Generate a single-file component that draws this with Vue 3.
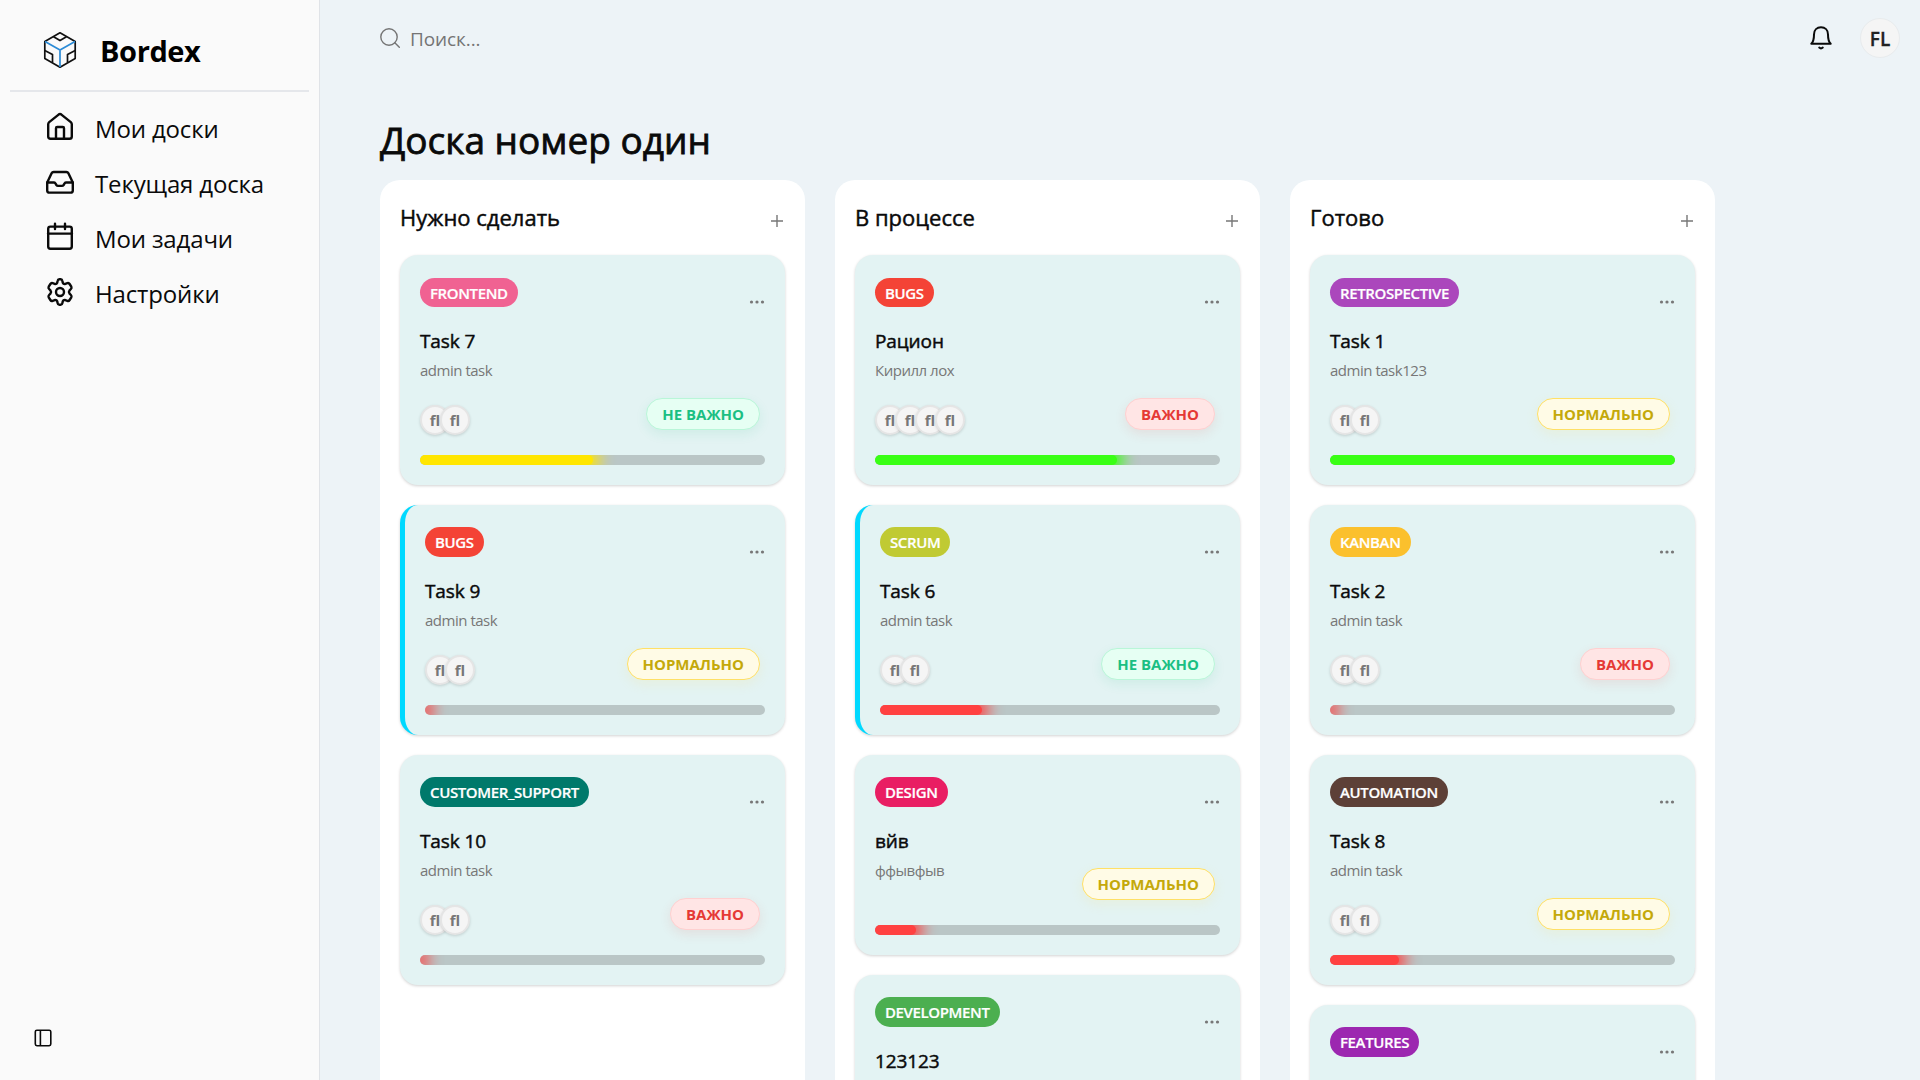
<script setup>
const nav = [
  { text: 'Мои доски', icon: 'home' },
  { text: 'Текущая доска', icon: 'inbox' },
  { text: 'Мои задачи', icon: 'calendar' },
  { text: 'Настройки', icon: 'gear' },
]

const priorities = {
  low: 'НЕ ВАЖНО',
  normal: 'НОРМАЛЬНО',
  high: 'ВАЖНО',
}

const RED = '#ff4141'
const YELLOW = '#ffe600'
const GREEN = '#39ff14'

const columns = [
  {
    title: 'Нужно сделать',
    cards: [
      { tag: 'FRONTEND', color: '#f06292', title: 'Task 7', text: 'admin task', users: 2, priority: 'low', progress: 50, bar: YELLOW },
      { tag: 'BUGS', color: '#f44336', title: 'Task 9', text: 'admin task', users: 2, priority: 'normal', progress: 0, bar: RED, mine: true },
      { tag: 'CUSTOMER_SUPPORT', color: '#00796b', title: 'Task 10', text: 'admin task', users: 2, priority: 'high', progress: 0, bar: RED },
    ],
  },
  {
    title: 'В процессе',
    cards: [
      { tag: 'BUGS', color: '#f44336', title: 'Рацион', text: 'Кирилл лох', users: 4, priority: 'high', progress: 70, bar: GREEN },
      { tag: 'SCRUM', color: '#c0ca33', title: 'Task 6', text: 'admin task', users: 2, priority: 'low', progress: 30, bar: RED, mine: true },
      { tag: 'DESIGN', color: '#e91e63', title: 'вйв', text: 'ффывфыв', users: 0, priority: 'normal', progress: 12, bar: RED },
      { tag: 'DEVELOPMENT', color: '#4caf50', title: '123123', text: '', users: 0, progress: 0, bar: RED },
    ],
  },
  {
    title: 'Готово',
    cards: [
      { tag: 'RETROSPECTIVE', color: '#ab47bc', title: 'Task 1', text: 'admin task123', users: 2, priority: 'normal', progress: 100, bar: GREEN },
      { tag: 'KANBAN', color: '#fbc02d', title: 'Task 2', text: 'admin task', users: 2, priority: 'high', progress: 0, bar: RED },
      { tag: 'AUTOMATION', color: '#5d4037', title: 'Task 8', text: 'admin task', users: 2, priority: 'normal', progress: 20, bar: RED },
      { tag: 'FEATURES', color: '#9c27b0', title: '', text: '', users: 0, progress: 0, bar: RED },
    ],
  },
]
</script>

<template>
  <div class="app">
    <aside class="sidebar">
      <div class="brand">
        <svg class="logo" width="34" height="38" viewBox="0 0 34 38" fill="none" stroke-width="1.7" stroke-linejoin="round">
          <path d="M17 1.8 32.2 10.4V27.4L17 36.2 1.8 27.4V10.4Z" stroke="#111" />
          <path d="M11 5.4V6L17 9.6 23 6V5.4M1.8 19.6 9.5 23.6V31.4M32.2 19.6 24.5 23.6V31.4" stroke="#111" />
          <path d="M2 10.6 17 19 32 10.6M17 19V36" stroke="#2b8bd6" />
        </svg>
        <span class="brand-name">Bordex</span>
      </div>
      <nav class="nav">
        <a v-for="item in nav" :key="item.text" class="nav-item">
          <svg class="nav-icon" width="30" height="30" viewBox="0 0 30 30" fill="none" stroke="#0a0a0a" stroke-width="2.4" stroke-linecap="round" stroke-linejoin="round">
            <template v-if="item.icon === 'home'">
              <path d="M3.2 12.2Q3.2 11 4.2 10.1L13.6 2.6Q15 1.6 16.4 2.6L25.8 10.1Q26.8 11 26.8 12.2V24.4Q26.8 26.7 24.5 26.7H5.5Q3.2 26.7 3.2 24.4Z" />
              <path d="M11 26.5V16.2Q11 15 12.2 15H17.8Q19 15 19 16.2V26.5" />
            </template>
            <template v-else-if="item.icon === 'inbox'">
              <path d="M2.2 15.5 6.6 6.2Q7.2 5 8.6 5H21.4Q22.8 5 23.4 6.2L27.8 15.5V23.4Q27.8 25.6 25.6 25.6H4.4Q2.2 25.6 2.2 23.4Z" />
              <path d="M2.2 15.5H8.8Q9.8 15.5 10.4 16.4L11.4 18Q12 18.9 13 18.9H17Q18 18.9 18.6 18L19.6 16.4Q20.2 15.5 21.2 15.5H27.8" />
            </template>
            <template v-else-if="item.icon === 'calendar'">
              <rect x="3.2" y="4.6" width="23.6" height="22.2" rx="2.2" />
              <path d="M3 11.6H27M10 1.8V7M20 1.8V7" />
            </template>
            <template v-else>
              <circle cx="15" cy="15" r="4" />
              <path d="M12.6 3.9Q12.9 2.2 14.3 2.2H15.7Q17.1 2.2 17.4 3.9L17.8 5.8Q18.3 7 19.7 7.1L22.3 6.2Q23.8 5.7 24.6 7L26.3 9.7Q26.9 11 25.9 12L24.6 13.3Q23.3 15 24.6 16.7L25.9 18Q26.9 19 26.3 20.3L24.6 23Q23.8 24.3 22.3 23.8L19.7 22.9Q18.3 23 17.8 24.2L17.4 26.1Q17.1 27.8 15.7 27.8H14.3Q12.9 27.8 12.6 26.1L12.2 24.2Q11.7 23 10.3 22.9L7.7 23.8Q6.2 24.3 5.4 23L3.7 20.3Q3.1 19 4.1 18L5.4 16.7Q6.7 15 5.4 13.3L4.1 12Q3.1 11 3.7 9.7L5.4 7Q6.2 5.7 7.7 6.2L10.3 7.1Q11.7 7 12.2 5.8Z" />
            </template>
          </svg>
          <span class="nav-text">{{ item.text }}</span>
        </a>
      </nav>
      <svg class="collapse" width="20" height="20" viewBox="0 0 20 20" fill="none" stroke="#0a0a0a" stroke-width="1.6">
        <rect x="2.3" y="2.2" width="15.5" height="15.5" rx="1.6" />
        <path d="M7.4 2.2V17.7" />
      </svg>
    </aside>

    <main class="main">
      <header class="topbar">
        <label class="search">
          <svg width="20" height="20" viewBox="0 0 20 20" fill="none" stroke="#757575" stroke-width="1.4" stroke-linecap="round">
            <circle cx="9" cy="9" r="8.2" />
            <path d="M14.8 14.8 19.3 19.2" />
          </svg>
          <span class="search-text">Поиск...</span>
        </label>
        <div class="tools">
          <svg width="24" height="26" viewBox="0 0 24 26" fill="none" stroke="#0a0a0a" stroke-width="2" stroke-linecap="round" stroke-linejoin="round">
            <path d="M2.3 18.8C4.6 16.4 5 14.5 5 9.4C5 5 8 2.2 12 2.2S19 5 19 9.4C19 14.5 19.4 16.4 21.7 18.8Z" />
            <path d="M10.2 22.6Q12 24.2 13.8 22.6" />
          </svg>
          <div class="profile">FL</div>
        </div>
      </header>

      <h1 class="title">Доска номер один</h1>

      <div class="board">
        <section v-for="col in columns" :key="col.title" class="column">
          <div class="column-head">
            <h2>{{ col.title }}</h2>
            <svg width="14" height="14" viewBox="0 0 14 14" stroke="#777" stroke-width="1.4"><path d="M1 7H13M7 1V13" /></svg>
          </div>
          <article v-for="card in col.cards" :key="card.tag" class="card" :class="{ mine: card.mine, short: !card.users }">
            <div class="card-top">
              <span class="tag" :style="{ background: card.color }">{{ card.tag }}</span>
              <svg class="dots" width="16" height="4" viewBox="0 0 16 4" fill="#777"><circle cx="2.5" cy="2" r="1.6" /><circle cx="8" cy="2" r="1.6" /><circle cx="13.5" cy="2" r="1.6" /></svg>
            </div>
            <h3>{{ card.title }}</h3>
            <p>{{ card.text }}</p>
            <div class="card-foot">
              <div class="users">
                <span v-for="n in card.users" :key="n" class="user">fl</span>
              </div>
              <span v-if="card.priority" class="priority" :class="card.priority">{{ priorities[card.priority] }}</span>
            </div>
            <div class="track">
              <div class="fill" :style="{ width: card.progress + '%', background: card.bar, color: card.bar }"></div>
            </div>
          </article>
        </section>
      </div>
    </main>
  </div>
</template>

<style>
body {
  margin: 0;
  overflow: hidden;
}
</style>

<style scoped>
.app {
  display: flex;
  width: 1920px;
  height: 1080px;
  overflow: hidden;
  background: #edf3f7;
  color: #0a0a0a;
  font-family: "Open Sans", "Noto Sans", sans-serif;
  box-sizing: border-box;
}
.sidebar {
  box-sizing: border-box;
  flex: none;
  display: flex;
  flex-direction: column;
  width: 320px;
  height: 1080px;
  padding: 0 10px;
  background: #fafafa;
  border-right: 1px solid #e0e3e7;
}
.brand {
  display: flex;
  align-items: center;
  height: 90px;
  padding-left: 33px;
  border-bottom: 2px solid #e5e7eb;
}
.logo {
  margin-top: 9px;
}
.brand-name {
  margin: 12px 0 0 23px;
  font-size: 29px;
  font-weight: 700;
  line-height: 40px;
  letter-spacing: -0.4px;
  color: #000;
}
.nav {
  display: flex;
  flex-direction: column;
  padding: 9px 0 0 35px;
}
.nav-item {
  display: flex;
  height: 55px;
}
.nav-icon {
  margin-top: 11px;
}
.nav-text {
  margin-left: 20px;
  font-size: 24px;
  line-height: 56px;
  letter-spacing: -0.15px;
  white-space: nowrap;
}
.collapse {
  margin: auto 0 32px 23px;
}
.main {
  flex: 1;
  display: flex;
  flex-direction: column;
  padding-left: 60px;
}
.topbar {
  flex: none;
  display: flex;
  justify-content: space-between;
  height: 76px;
  padding-right: 20px;
  align-items: center;
}
.search {
  display: flex;
  align-items: center;
  gap: 10px;
}
.search-text {
  font-size: 19px;
  line-height: 24px;
  letter-spacing: -0.1px;
  padding-top: 2px;
  color: #757575;
}
.tools {
  display: flex;
  align-items: center;
  gap: 27px;
}
.profile {
  box-sizing: border-box;
  width: 40px;
  height: 40px;
  border: 1px solid #e8ebed;
  border-radius: 50%;
  background: #f5f5f5;
  text-align: center;
  font-size: 19px;
  font-weight: 600;
  line-height: 40px;
  -webkit-text-stroke: 0.3px currentColor;
  color: #222;
}
.title {
  flex: none;
  height: 104px;
  margin: 0;
  font-size: 37px;
  font-weight: 500;
  line-height: 127px;
  -webkit-text-stroke: 0.8px currentColor;
  white-space: nowrap;
}
.board {
  display: flex;
  gap: 30px;
  flex: 1;
}
.column {
  box-sizing: border-box;
  width: 425px;
  height: 1000px;
  padding: 0 20px;
  border-radius: 20px;
  background: #fff;
}
.column-head {
  display: flex;
  align-items: center;
  justify-content: space-between;
  height: 75px;
  padding-right: 1px;
}
.column-head h2 {
  margin: -2px 0 0;
  font-size: 22px;
  font-weight: 500;
  line-height: 30px;
  -webkit-text-stroke: 0.45px currentColor;
}
.column-head svg {
  margin-top: 7px;
}
.card {
  box-sizing: border-box;
  height: 230px;
  margin-bottom: 20px;
  padding: 22px 20px 0;
  border-radius: 18px;
  background: #e3f3f3;
  box-shadow: 0 1px 3px rgba(0, 0, 0, 0.18);
}
.card.short {
  height: 200px;
}
.card.mine {
  border-left: 5px solid #00d9ff;
}
.card-top {
  display: flex;
  justify-content: space-between;
  height: 49px;
}
.tag {
  box-sizing: border-box;
  height: 30px;
  padding: 0 10px;
  border-radius: 15px;
  color: #fff;
  font-size: 15px;
  font-weight: 600;
  line-height: 31px;
  letter-spacing: -0.38px;
  -webkit-text-stroke: 0.2px currentColor;
}
.column-head + .card .tag {
  height: 29px;
  margin-top: 1px;
}
.dots {
  margin-top: 22.5px;
}
.card h3 {
  margin: 0;
  height: 30px;
  font-size: 19px;
  font-weight: 500;
  line-height: 30px;
  letter-spacing: -0.1px;
  -webkit-text-stroke: 0.45px currentColor;
}
.card p {
  margin: 0;
  height: 28px;
  font-size: 15px;
  line-height: 28px;
  letter-spacing: -0.48px;
  color: #777;
}
.card-foot {
  display: flex;
  justify-content: space-between;
  height: 71px;
}
.short .card-foot {
  height: 41px;
}
.users {
  display: flex;
  padding-top: 21px;
}
.user {
  box-sizing: border-box;
  width: 30px;
  height: 30px;
  margin-right: -10px;
  border: 2px solid #e5e5e5;
  border-radius: 50%;
  background: #f5f5f5;
  box-shadow: 0 1px 3px rgba(0, 0, 0, 0.15);
  text-align: center;
  font-size: 15px;
  font-weight: 700;
  line-height: 27px;
  color: #777;
}
.priority {
  box-sizing: border-box;
  height: 32px;
  margin: 14px 5px 0 0;
  padding: 0 15px;
  border: 1px solid;
  border-radius: 16px;
  font-size: 15px;
  font-weight: 700;
  line-height: 30px;
}
.short .priority {
  margin-top: -16px;
}
.low {
  color: #1bbf83;
  background: #e6fff3;
  border-color: #b9f6d8;
  box-shadow: 0 4px 12px rgba(27, 191, 131, 0.1);
}
.normal {
  color: #c4a90a;
  background: #fffbe6;
  border-color: #ffe066;
  box-shadow: 0 4px 12px rgba(255, 224, 102, 0.15);
}
.high {
  color: #e53935;
  background: #ffe5e5;
  border-color: #ffd0d0;
  box-shadow: 0 4px 12px rgba(229, 57, 53, 0.1);
}
.track {
  height: 10px;
  border-radius: 5px;
  background: #bac6c6;
  overflow: hidden;
}
.fill {
  height: 10px;
  border-radius: 5px;
  box-shadow: 0 0 15px 7px currentColor;
}
</style>
